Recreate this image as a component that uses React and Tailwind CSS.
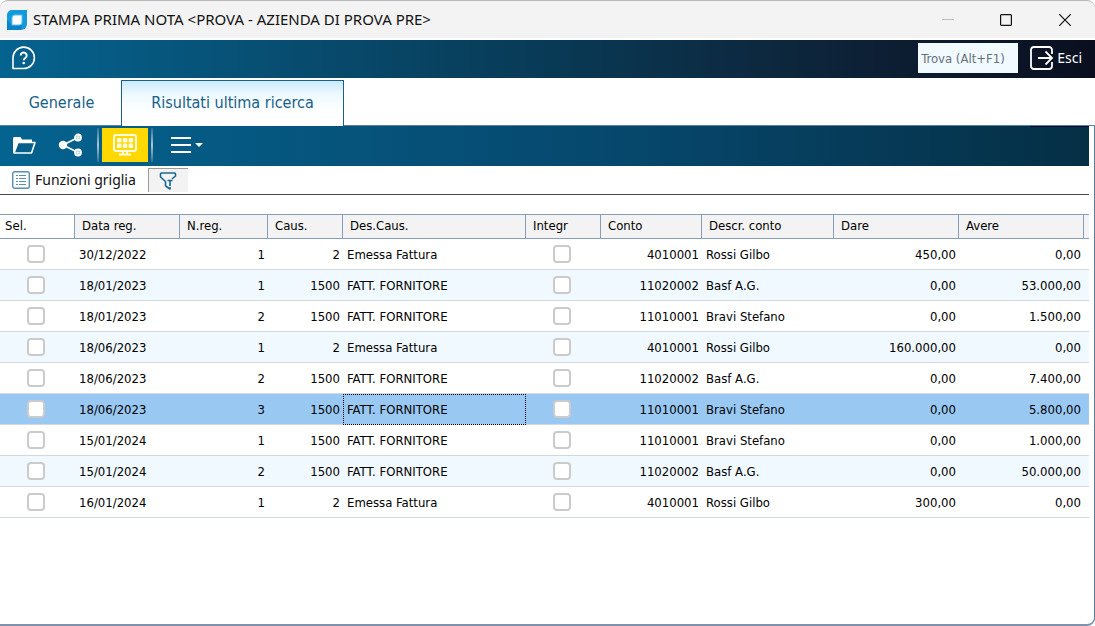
import React, { useState } from "react";

const columns = [
  { key: "sel", label: "Sel.", width: "w-[75px]", type: "check" },
  { key: "data", label: "Data reg.", width: "w-[105px]" },
  { key: "nreg", label: "N.reg.", width: "w-[88px]", type: "number" },
  { key: "caus", label: "Caus.", width: "w-[75px]", type: "number" },
  { key: "desCaus", label: "Des.Caus.", width: "w-[183px]" },
  { key: "integr", label: "Integr", width: "w-[75px]", type: "check" },
  { key: "conto", label: "Conto", width: "w-[101px]", type: "number" },
  { key: "descr", label: "Descr. conto", width: "w-[132px]" },
  { key: "dare", label: "Dare", width: "w-[125px]", type: "number" },
  { key: "avere", label: "Avere", width: "w-[125px]", type: "number" },
];

const movimenti = [
  ["30/12/2022", "1", "2", "Emessa Fattura", "4010001", "Rossi Gilbo", "450,00", "0,00"],
  ["18/01/2023", "1", "1500", "FATT. FORNITORE", "11020002", "Basf A.G.", "0,00", "53.000,00"],
  ["18/01/2023", "2", "1500", "FATT. FORNITORE", "11010001", "Bravi Stefano", "0,00", "1.500,00"],
  ["18/06/2023", "1", "2", "Emessa Fattura", "4010001", "Rossi Gilbo", "160.000,00", "0,00"],
  ["18/06/2023", "2", "1500", "FATT. FORNITORE", "11020002", "Basf A.G.", "0,00", "7.400,00"],
  ["18/06/2023", "3", "1500", "FATT. FORNITORE", "11010001", "Bravi Stefano", "0,00", "5.800,00"],
  ["15/01/2024", "1", "1500", "FATT. FORNITORE", "11010001", "Bravi Stefano", "0,00", "1.000,00"],
  ["15/01/2024", "2", "1500", "FATT. FORNITORE", "11020002", "Basf A.G.", "0,00", "50.000,00"],
  ["16/01/2024", "1", "2", "Emessa Fattura", "4010001", "Rossi Gilbo", "300,00", "0,00"],
].map(([data, nreg, caus, desCaus, conto, descr, dare, avere]) => ({
  data, nreg, caus, desCaus, conto, descr, dare, avere,
}));

const TitleBar = () => (
  <div className="flex h-[38px] items-center border-t border-[#b9b9b9] bg-[#f3f3f3] rounded-t-lg pl-[7px]">
    <svg className="h-5 w-5" viewBox="0 0 20 20">
      <path d="M5 0h15v14a6 6 0 0 1-6 6H0V5a5 5 0 0 1 5-5z" fill="#129bdb" />
      <path d="M0 20V10l5 5h10l-1 5z" fill="#0b83c8" />
      <path d="M8 4.500h7.500V12a3.500 3.500 0 0 1-3.500 3.500H4.500V8A3.500 3.500 0 0 1 8 4.500z" fill="#5cc0ec" />
      <path d="M8 5.500h6.500V12a2.500 2.500 0 0 1-2.500 2.500H5.500V8A2.500 2.500 0 0 1 8 5.500z" fill="#fff" />
    </svg>
    <h1 className="ml-1.5 flex-1 font-['Noto_Sans',sans-serif] text-[15px] text-[#111]">
      STAMPA PRIMA NOTA &lt;PROVA - AZIENDA DI PROVA PRE&gt;
    </h1>
    <button aria-label="Riduci" className="flex h-full w-[58px] items-center justify-center">
      <svg className="h-3 w-3" viewBox="0 0 12 12" stroke="#bdbdbd">
        <path d="M0 5.500h12" />
      </svg>
    </button>
    <button aria-label="Ingrandisci" className="flex h-full w-[58px] items-center justify-center">
      <svg className="h-3 w-3" viewBox="0 0 12 12" fill="none" stroke="#111" strokeWidth="1.200">
        <rect x="0.600" y="0.600" width="10.800" height="10.800" rx="1" />
      </svg>
    </button>
    <button aria-label="Chiudi" className="flex h-full w-[60px] items-center justify-center">
      <svg className="h-3 w-3" viewBox="0 0 12 12" stroke="#111" strokeWidth="1.200">
        <path d="M0.300 0.300l11.400 11.400M11.700 0.300L0.300 11.700" />
      </svg>
    </button>
  </div>
);

const HeaderBar = () => (
  <div className="mt-0.5 flex h-[38px] items-center bg-linear-to-r from-[#04638f] from-0% via-[#083a56] via-50% to-[#0a0f1f] pb-0.5 pl-3 pr-[13px]">
    <button aria-label="Aiuto" className="flex-none">
      <svg className="h-6 w-6" viewBox="0 0 24 24" fill="none" stroke="#fff" strokeWidth="1.600">
        <path d="M1 22.500V12A10.700 10.700 0 1 1 11.700 22.500z" strokeLinejoin="round" />
        <path d="M8.700 9.500a3 3 0 1 1 4.600 2.500c-1.100.7-1.600 1.100-1.600 2.300" strokeWidth="2" />
        <circle cx="11.700" cy="17" r="0.700" strokeWidth="1.200" />
      </svg>
    </button>
    <input
      type="text"
      aria-label="Trova"
      placeholder="Trova (Alt+F1)"
      className="ml-auto h-[30px] w-[100px] bg-[#f0faff] px-[3px] text-[13px] text-[#333] placeholder:text-[#66707a]"
    />
    <button className="ml-3 flex items-center gap-[3px] font-['Noto_Sans',sans-serif] text-sm text-white">
      <svg className="h-6 w-6" viewBox="0 0 24 24" fill="none" stroke="#fff" strokeWidth="1.800">
        <path d="M22 8V4a3 3 0 0 0-3-3H4a3 3 0 0 0-3 3v16a3 3 0 0 0 3 3h15a3 3 0 0 0 3-3v-4" />
        <path d="M8 12h14M15.500 5.500L22 12l-6.500 6.500" />
      </svg>
      Esci
    </button>
  </div>
);

const Tabs = ({ tab, setTab }) => (
  <div role="tablist" className="flex h-12 items-stretch border-b border-[#5a7f9f] pt-0.5 text-base text-[#17608a]">
    <button role="tab" aria-selected={tab === 0} onClick={() => setTab(0)} className="w-[121px] pl-0.5">
      Generale
    </button>
    <button
      role="tab"
      aria-selected={tab === 1}
      onClick={() => setTab(1)}
      className="-mb-px w-[223px] border border-b-0 border-[#1b5f86] bg-white bg-linear-to-b from-[#c9ebfd] via-[#eef9ff] via-30% to-white to-70% pb-0.5"
    >
      Risultati ultima ricerca
    </button>
  </div>
);

const Divider = () => (
  <span className="h-[34px] w-0.5 bg-linear-to-b from-[#2c7398] via-[#a9c6d6] to-[#2c7398]" />
);

const Toolbar = () => (
  <div className="flex h-10 items-center bg-linear-to-r from-[#04638f] via-[#06466b] via-60% to-[#052f45] pb-0.5">
    <button aria-label="Apri" className="ml-3 flex-none">
      <svg className="h-6 w-6" viewBox="0 0 24 24" fill="none" stroke="#fff" strokeWidth="1.600" strokeLinejoin="round">
        <path d="M1.500 4h7l1.500 2.500h10V10H6L3 18l-1.500 2z" fill="#fff" stroke="none" />
        <path d="M2 20L6 9.500h17L19.500 20z" fill="#045f8a" />
        <path d="M1.800 20V5" />
      </svg>
    </button>
    <button aria-label="Condividi" className="ml-[22px] flex-none">
      <svg className="h-6 w-6" viewBox="0 0 24 24" fill="none" stroke="#fff" strokeWidth="1.800">
        <path d="M5 12l15-7.500M5 12l15 7.500" />
        <circle cx="5" cy="12" r="3.300" fill="#fff" />
        <circle cx="20" cy="4.500" r="3" fill="#9fc4d8" />
        <circle cx="20" cy="19.500" r="3" fill="#9fc4d8" />
        <path d="M18.500 4.500h3M20 3v3M18.500 19.500h3M20 18v3" strokeWidth="1" />
      </svg>
    </button>
    <div className="ml-[15px] flex h-full items-center gap-[3px]">
      <Divider />
      <button aria-label="Vista griglia" className="flex h-[34px] w-[46px] items-center justify-center bg-[#ffd800]">
        <svg className="h-6 w-6" viewBox="0 0 24 24" fill="none" stroke="#fffbe0" strokeWidth="2">
          <rect x="1" y="2" width="22" height="16" rx="2" />
          <path d="M10 18v3M14 18v3M6 21.500h12" />
          <g fill="#fffbe0" stroke="none">
            <rect x="4" y="5" width="4.500" height="4.500" rx="1" />
            <rect x="9.800" y="5" width="4.500" height="4.500" rx="1" />
            <rect x="15.600" y="5" width="4.500" height="4.500" rx="1" />
            <rect x="4" y="10.500" width="4.500" height="4.500" rx="1" />
            <rect x="9.800" y="10.500" width="4.500" height="4.500" rx="1" />
            <rect x="15.600" y="10.500" width="4.500" height="4.500" rx="1" />
          </g>
        </svg>
      </button>
      <Divider />
    </div>
    <button aria-label="Menu" className="ml-[18px] flex items-center gap-1">
      <svg className="h-4 w-5" viewBox="0 0 20 16" stroke="#fff" strokeWidth="2">
        <path d="M0 1h20M0 8h20M0 15h20" />
      </svg>
      <svg className="h-1 w-2" viewBox="0 0 8 4">
        <path d="M0 0h8L4 4z" fill="#fff" />
      </svg>
    </button>
    <span className="ml-auto h-px w-[59px] self-start bg-[#02083a]" />
  </div>
);

const GridFunctions = () => (
  <div className="flex h-[29px] items-end border-b border-[#4a4a4a]">
    <button className="flex h-7 items-center gap-[5px] pl-3 pr-3 font-['Noto_Sans',sans-serif] text-sm text-[#111]">
      <svg className="h-[18px] w-[18px]" viewBox="0 0 18 18" fill="none" stroke="#5b8fae">
        <rect x="0.700" y="0.700" width="16.600" height="16.600" rx="2" strokeWidth="1.400" />
        <path d="M4 4.500h2M7 4.500h7M4 7.500h2M7 7.500h7M4 10.500h2M7 10.500h7M4 13.500h2M7 13.500h7" />
      </svg>
      Funzioni griglia
    </button>
    <button
      aria-label="Filtro"
      className="mb-0.5 flex h-6 w-10 items-center justify-center border-l border-t border-[#9a9a9a] bg-[#f3f3f3]"
    >
      <svg
        className="h-[18px] w-[18px]"
        viewBox="0 0 18 18"
        fill="none"
        stroke="#17698f"
        strokeWidth="1.600"
        strokeLinejoin="round"
      >
        <path d="M6.500 14V9.500L1.500 5V2a1 1 0 0 1 1-1h13a1 1 0 0 1 1 1v2L13 7" />
        <path d="M6.500 14l4.500 3v-2" />
        <path d="M8.500 8.500h5M11 8.500v5.500" />
      </svg>
    </button>
  </div>
);

const Check = ({ label }) => (
  <input
    type="checkbox"
    aria-label={label}
    className="mx-auto block h-[18px] w-[18px] appearance-none rounded-sm border-2 border-[#cbcbcb] bg-white checked:bg-[#17608a]"
  />
);

const Grid = ({ selected, setSelected }) => (
  <table className="mt-[19px] w-full table-fixed border-separate border-spacing-0 text-[13px] leading-4 text-black">
    <thead>
      <tr>
        {columns.map((col) => (
          <th
            key={col.key}
            className={`${col.width} h-[25px] border-y border-r border-[#8a9db8] p-0 pb-0.5 text-left font-normal ${
              col.key === "sel" ? "bg-white pl-[5px]" : "bg-[#f3f3f3] pl-[7px]"
            }`}
          >
            {col.label}
          </th>
        ))}
        <td className="border-y border-[#8a9db8] bg-[#f3f3f3]" />
      </tr>
    </thead>
    <tbody>
      {movimenti.map((row, i) => {
        const active = i === selected;
        const bg = active ? "bg-[#99c9f3]" : i % 2 ? "bg-[#f0f9ff]" : "bg-white";

        return (
          <tr key={i} className={bg} onClick={() => setSelected(i)}>
            {columns.map((col) => (
              <td
                key={col.key}
                className={`h-[31px] whitespace-nowrap border-b border-[#d3d7de] p-0 ${
                  col.type === "number" ? "pt-px pr-[3px] text-right" : col.type === "check" ? "pr-1" : "pt-px pl-1"
                } ${active && col.key === "desCaus" ? "outline-1 -outline-offset-1 outline-dotted outline-black" : ""}`}
              >
                {col.type === "check" ? <Check label={`${col.label} riga ${i + 1}`} /> : row[col.key]}
              </td>
            ))}
            <td className="border-b border-[#d3d7de]" />
          </tr>
        );
      })}
    </tbody>
  </table>
);

const App = () => {
  const [tab, setTab] = useState(1);
  const [selected, setSelected] = useState(5);

  return (
    <div className="flex min-h-screen flex-col bg-white font-['DejaVu_Sans_Condensed','DejaVu_Sans',sans-serif]">
      <TitleBar />
      <HeaderBar />
      <Tabs tab={tab} setTab={setTab} />
      <main className="flex-1 rounded-br-lg border-b-2 border-r border-b-[#7f92ad] border-r-[#5a7f9f] pr-[5px]">
        <Toolbar />
        <GridFunctions />
        <Grid selected={selected} setSelected={setSelected} />
      </main>
    </div>
  );
};

export default App;
